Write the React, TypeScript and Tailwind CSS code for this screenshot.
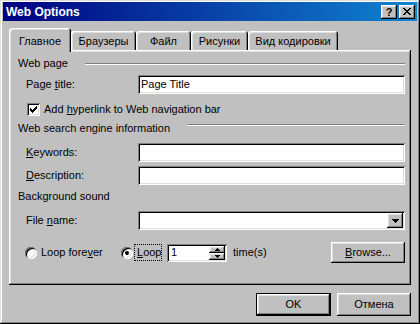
import React from "react";

const raised =
  "bg-[#c0c0c0] shadow-[inset_-1px_-1px_0_#000,inset_1px_1px_0_#fff,inset_-2px_-2px_0_#808080,inset_2px_2px_0_#dfdfdf]";
const sunken =
  "bg-white shadow-[inset_1px_1px_0_#808080,inset_-1px_-1px_0_#fff,inset_2px_2px_0_#000,inset_-2px_-2px_0_#dfdfdf]";

function XIcon() {
  return (
    <svg width="8" height="7" viewBox="0 0 8 7" shapeRendering="crispEdges">
      <path
        d="M0 0h2v1h-2zM6 0h2v1h-2zM1 1h2v1h-2zM5 1h2v1h-2zM2 2h4v1h-4zM3 3h2v1h-2zM2 4h4v1h-4zM1 5h2v1h-2zM5 5h2v1h-2zM0 6h2v1h-2zM6 6h2v1h-2z"
        fill="#000"
      />
    </svg>
  );
}

function CheckIcon() {
  return (
    <svg width="7" height="7" viewBox="0 0 7 7" shapeRendering="crispEdges">
      <path
        d="M6 0h1v1h-1zM5 1h2v1h-2zM0 2h1v1h-1zM4 2h3v1h-3zM0 3h2v1h-2zM3 3h3v1h-3zM0 4h5v1h-5zM1 5h3v1h-3zM2 6h1v1h-1z"
        fill="#000"
      />
    </svg>
  );
}

function DownTri() {
  return (
    <svg width="7" height="4" viewBox="0 0 7 4" shapeRendering="crispEdges">
      <path d="M0 0h7v1h-7zM1 1h5v1h-5zM2 2h3v1h-3zM3 3h1v1h-1z" fill="#000" />
    </svg>
  );
}

function SmallUp() {
  return (
    <svg width="5" height="3" viewBox="0 0 5 3" shapeRendering="crispEdges">
      <path d="M2 0h1v1h-1zM1 1h3v1h-3zM0 2h5v1h-5z" fill="#000" />
    </svg>
  );
}

function SmallDown() {
  return (
    <svg width="5" height="3" viewBox="0 0 5 3" shapeRendering="crispEdges">
      <path d="M0 0h5v1h-5zM1 1h3v1h-3zM2 2h1v1h-1z" fill="#000" />
    </svg>
  );
}

function Header({ label, lineMt }: { label: string; lineMt?: string }) {
  return (
    <div className="flex items-start h-[16px]">
      <span className="leading-[16px] whitespace-nowrap">{label}</span>
      {lineMt && (
        <div
          className={`flex-1 ml-[17px] h-[2px] border-t border-t-[#808080] border-b border-b-white ${lineMt}`}
        />
      )}
    </div>
  );
}

function Field({
  label,
  value,
  className,
}: {
  label: React.ReactNode;
  value?: string;
  className: string;
}) {
  return (
    <div className={`flex items-center h-[19px] ${className}`}>
      <div className="w-[120px] pl-[8px] whitespace-nowrap">{label}</div>
      <div className={`flex-1 h-[19px] ${sunken} flex items-center pl-[3px]`}>
        {value}
      </div>
    </div>
  );
}

function Radio({ checked }: { checked?: boolean }) {
  return (
    <div
      className={`w-[12px] h-[12px] rounded-full flex items-center justify-center bg-white shadow-[inset_1px_1px_0_#808080,inset_-1px_-1px_0_#fff,inset_2px_2px_0_#000,inset_-2px_-2px_0_#dfdfdf]`}
    >
      {checked && <div className="w-[4px] h-[4px] rounded-full bg-black" />}
    </div>
  );
}

const tabs = [
  { label: "Браузеры", w: "w-[65px]" },
  { label: "Файл", w: "w-[55px]" },
  { label: "Рисунки", w: "w-[57px]" },
  { label: "Вид кодировки", w: "w-[90px]" },
];

export default function App() {
  return (
    <div className="w-[420px] h-[324px] bg-[#c0c0c0] font-['Liberation_Sans',Arial,sans-serif] text-[11px] text-black leading-none select-none shadow-[inset_-1px_-1px_0_#000,inset_1px_1px_0_#dfdfdf,inset_-2px_-2px_0_#808080,inset_2px_2px_0_#fff] pt-[2px] px-[3px] pb-[3px] flex flex-col">
      {/* Title bar */}
      <div className="h-[19px] flex items-center bg-[linear-gradient(90deg,#000080,#1084d0)] pl-[3px] pr-[2px]">
        <span className="flex-1 text-white font-bold text-[12px] whitespace-nowrap">
          Web Options
        </span>
        <div className={`w-[16px] h-[14px] ${raised} flex items-center justify-center`}>
          <span className="font-bold text-[11px] leading-none pt-[1px]">?</span>
        </div>
        <div className={`ml-[2px] w-[16px] h-[14px] ${raised} flex items-center justify-center`}>
          <XIcon />
        </div>
      </div>

      {/* Tabs */}
      <div className="mt-[7px] ml-[6px] h-[24px] flex items-end relative z-10 -mb-[2px]">
        <div className="w-[62px] h-[24px] bg-[#c0c0c0] rounded-t-[3px] shadow-[inset_1px_1px_0_#fff,inset_-1px_0_0_#000,inset_-2px_0_0_#808080,inset_2px_2px_0_#dfdfdf] flex justify-center pt-[7px]">
          <span className="leading-[13px]">Главное</span>
        </div>
        {tabs.map((t) => (
          <div
            key={t.label}
            className={`${t.w} h-[19px] mb-[2px] bg-[#c0c0c0] rounded-t-[3px] shadow-[inset_1px_1px_0_#fff,inset_-1px_0_0_#000,inset_-2px_0_0_#808080,inset_2px_2px_0_#dfdfdf] flex justify-center pt-[4px]`}
          >
            <span className="leading-[13px] whitespace-nowrap">{t.label}</span>
          </div>
        ))}
      </div>

      {/* Panel */}
      <div
        className={`ml-[6px] w-[402px] h-[235px] ${raised} pt-[5px] pl-[9px] pr-[6px] flex flex-col`}
      >
        <Header label="Web page" lineMt="mt-[8px]" />
        <Field
          className="mt-[4px]"
          label={
            <>
              Page <u>t</u>itle:
            </>
          }
          value="Page Title"
        />
        <div className="mt-[6px] h-[19px] flex items-center pl-[9px]">
          <div className={`w-[13px] h-[13px] ${sunken} flex items-center justify-center`}>
            <CheckIcon />
          </div>
          <span className="ml-[4px] whitespace-nowrap">
            Add <u>h</u>yperlink to Web navigation bar
          </span>
        </div>
        <div className="mt-[1px]">
          <Header label="Web search engine information" lineMt="mt-[4px]" />
        </div>
        <Field
          className="mt-[7px]"
          label={
            <>
              <u>K</u>eywords:
            </>
          }
        />
        <Field
          className="mt-[4px]"
          label={
            <>
              <u>D</u>escription:
            </>
          }
        />
        <div className="mt-[3px]">
          <Header label="Background sound" />
        </div>
        <div className="mt-[7px] flex items-center h-[19px]">
          <div className="w-[120px] pl-[8px] whitespace-nowrap">
            File <u>n</u>ame:
          </div>
          <div className={`flex-1 h-[19px] ${sunken} flex items-center justify-end pr-[2px]`}>
            <div className={`w-[16px] h-[15px] ${raised} flex items-center justify-center`}>
              <DownTri />
            </div>
          </div>
        </div>

        {/* Loop row */}
        <div className="mt-[12px] h-[21px] flex items-center">
          <div className="w-[103px] pl-[7px] flex items-center">
            <Radio />
            <span className="ml-[4px] whitespace-nowrap">
              Loop fore<u>v</u>er
            </span>
          </div>
          <Radio checked />
          <div className="ml-[1px] w-[28px] h-[17px] border border-dotted border-black flex items-center pl-[2px]">
            <span>
              <u>L</u>oop
            </span>
          </div>
          <div className={`ml-[5px] w-[60px] h-[18px] ${sunken} flex items-center pl-[4px] pr-[2px]`}>
            <span className="flex-1">1</span>
            <div className="flex flex-col w-[16px]">
              <div className={`h-[7px] ${raised} flex items-center justify-center`}>
                <SmallUp />
              </div>
              <div className={`h-[7px] ${raised} flex items-center justify-center`}>
                <SmallDown />
              </div>
            </div>
          </div>
          <span className="ml-[6px]">time(s)</span>
          <div
            className={`ml-auto w-[74px] h-[21px] ${raised} flex items-center justify-center`}
          >
            <span>
              <u>B</u>rowse...
            </span>
          </div>
        </div>
      </div>

      {/* Bottom buttons */}
      <div className="mt-[8px] flex justify-end gap-[6px] pr-[6px]">
        <div className="w-[75px] h-[23px] border border-black">
          <div className={`w-full h-full ${raised} flex items-center justify-center`}>
            OK
          </div>
        </div>
        <div className={`w-[74px] h-[23px] ${raised} flex items-center justify-center`}>
          Отмена
        </div>
      </div>
    </div>
  );
}
